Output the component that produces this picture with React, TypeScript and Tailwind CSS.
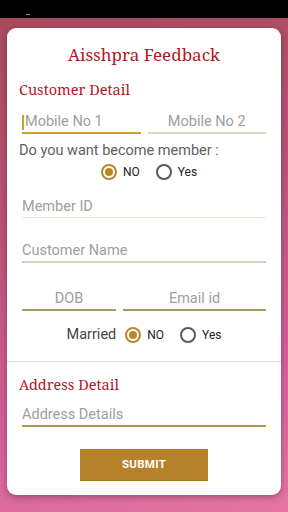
import React from "react";

const serif = { fontFamily: '"Noto Serif", "DejaVu Serif", "Liberation Serif", serif' };

function Radio({ checked }: { checked: boolean }) {
  return checked ? (
    <span className="w-[16px] h-[16px] rounded-full border-[2px] border-[#b8872c] flex items-center justify-center">
      <span className="w-[8px] h-[8px] rounded-full bg-[#b8872c]" />
    </span>
  ) : (
    <span className="w-[16px] h-[16px] rounded-full border-[2px] border-[#5a5a5a]" />
  );
}

function Field({
  label,
  line,
  center,
  cursor,
  className = "",
  thick = true,
}: {
  label: string;
  line: string;
  center?: boolean;
  cursor?: boolean;
  className?: string;
  thick?: boolean;
}) {
  return (
    <div
      className={`h-[22px] flex items-center ${center ? "justify-center" : ""} ${className}`}
      style={{ borderBottom: `${thick ? 2 : 1}px solid ${line}` }}
    >
      {cursor && <span className="w-[2px] h-[15px] bg-[#c9a227] mr-[1px]" />}
      <span className="text-[14.5px] leading-[22px] text-[#9e9e9e]">{label}</span>
    </div>
  );
}

export default function App() {
  return (
    <div
      className="w-[288px] h-[512px] overflow-hidden flex flex-col"
      style={{ fontFamily: 'Roboto, "Liberation Sans", sans-serif' }}
    >
      <div className="h-[18px] bg-black relative shrink-0">
        <span className="absolute left-[26px] top-[14px] w-[4px] h-[1px] bg-[#888]" />
      </div>
      <div className="flex-1 bg-[linear-gradient(165deg,#a84a5e_0%,#bd5378_40%,#d4619a_75%,#e476a0_100%)] px-[7px] pt-[10px]">
        <div className="bg-white rounded-[9px] shadow-[0_2px_6px_rgba(0,0,0,0.3)] flex flex-col pb-[14px]">
          <div
            className="mt-[15px] text-center text-[17px] leading-[24px] text-[#b1171f]"
            style={serif}
          >
            Aisshpra Feedback
          </div>
          <div className="px-[12px] flex flex-col">
            <div className="mt-[12px] text-[14.5px] leading-[20px] text-[#b1171f]" style={serif}>
              Customer Detail
            </div>
            <div className="px-[3px] mt-[13px] flex gap-[7px]">
              <Field label="Mobile No 1" line="#c9a227" cursor className="flex-1" />
              <Field label="Mobile No 2" line="#ddd9c2" center className="flex-1" />
            </div>
            <div className="mt-[8px] text-[14.5px] leading-[18px] text-[#5f5f5f]">
              Do you want become member :
            </div>
            <div className="mt-[3px] h-[18px] flex items-center justify-center gap-[6px] pl-[10px]">
              <Radio checked />
              <span className="text-[12px] text-[#222] mr-[10px]">NO</span>
              <Radio checked={false} />
              <span className="text-[12px] text-[#222]">Yes</span>
            </div>
            <div className="px-[3px] mt-[15px]">
              <Field label="Member ID" line="#e8e5d6" thick={false} />
            </div>
            <div className="px-[3px] mt-[23px]">
              <Field label="Customer Name" line="#d6d3b6" />
            </div>
            <div className="px-[3px] mt-[26px] flex gap-[7px]">
              <Field label="DOB" line="#ab9b62" center className="w-[94px]" />
              <Field label="Email id" line="#ab9b62" center className="flex-1" />
            </div>
            <div className="mt-[14px] h-[20px] flex items-center justify-center gap-[6px]">
              <span className="text-[14.5px] text-[#444] mr-[3px]">Married</span>
              <Radio checked />
              <span className="text-[12px] text-[#222] mr-[10px]">NO</span>
              <Radio checked={false} />
              <span className="text-[12px] text-[#222]">Yes</span>
            </div>
          </div>
          <div className="mt-[16px] h-[1px] bg-[#dcdcdc]" />
          <div className="px-[12px] flex flex-col">
            <div className="mt-[12px] text-[14.5px] leading-[20px] text-[#b1171f]" style={serif}>
              Address Detail
            </div>
            <div className="px-[3px] mt-[11px]">
              <Field label="Address Details" line="#a89a52" />
            </div>
            <div className="mt-[22px] flex justify-center">
              <button className="w-[128px] h-[32px] bg-[#b5822a] text-white text-[11.5px] font-bold tracking-[0.3px] border-b border-[#a87522]">
                SUBMIT
              </button>
            </div>
          </div>
        </div>
      </div>
    </div>
  );
}
